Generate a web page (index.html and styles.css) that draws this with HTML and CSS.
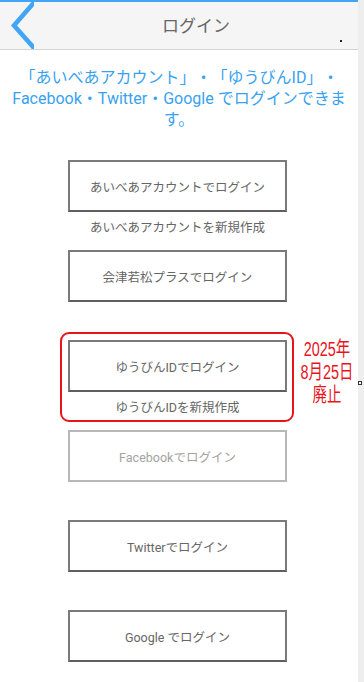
FILE: index.html
```html
<!DOCTYPE html>
<html lang="ja">
<head>
<meta charset="utf-8">
<title>ログイン</title>
<link rel="stylesheet" href="styles.css">
</head>
<body>
<div class="screen">
  <div class="page">
    <header class="topbar">
      <a class="back" href="#" aria-label="戻る">
        <svg width="34" height="47" viewBox="0 0 34 47">
          <polyline points="37.1,-3 14,23.5 37.6,50" fill="none" stroke="#42a5f5" stroke-width="4.6" stroke-linejoin="miter"/>
        </svg>
      </a>
      <h1 class="title">ログイン</h1>
      <span class="dot"></span>
    </header>
    <p class="intro">「あいべあアカウント」・「ゆうびんID」・Facebook・Twitter・Google でログインできます。</p>
    <ul class="logins">
      <li class="login-item">
        <a class="btn" href="#">あいべあアカウントでログイン</a>
        <div class="sub"><a href="#">あいべあアカウントを新規作成</a></div>
      </li>
      <li class="login-item">
        <a class="btn" href="#">会津若松プラスでログイン</a>
        <div class="sub"></div>
      </li>
      <li class="login-item retired">
        <a class="btn" href="#">ゆうびんIDでログイン</a>
        <div class="sub"><a href="#">ゆうびんIDを新規作成</a></div>
        <div class="notice">
          <span class="notice-line">2025年</span>
          <span class="notice-line">8月25日</span>
          <span class="notice-line">廃止</span>
        </div>
      </li>
      <li class="login-item">
        <a class="btn btn-muted" href="#">Facebookでログイン</a>
        <div class="sub"></div>
      </li>
      <li class="login-item">
        <a class="btn" href="#">Twitterでログイン</a>
        <div class="sub"></div>
      </li>
      <li class="login-item">
        <a class="btn" href="#">Google でログイン</a>
        <div class="sub"></div>
      </li>
    </ul>
  </div>
  <aside class="rail"><span class="marker"></span></aside>
</div>
</body>
</html>
```

FILE: styles.css
```css
html, body {
  margin: 0;
  padding: 0;
  background: #ffffff;
}

body {
  font-family: Roboto, "Noto Sans CJK JP", sans-serif;
  color: #666666;
}

.screen {
  display: flex;
  width: 364px;
  height: 682px;
  overflow: hidden;
}

.page {
  width: 358px;
  flex: none;
}

.rail {
  width: 6px;
  flex: none;
  background: #eeeeee;
}

.marker {
  display: block;
  margin-top: 381px;
  width: 4px;
  height: 4px;
  border: 1px solid #333333;
  box-sizing: border-box;
  background: #ffffff;
}

.topbar {
  position: relative;
  display: flex;
  align-items: center;
  height: 47px;
  border-top: 2px solid #42a5f5;
  border-bottom: 1px solid #d4d4d4;
  background: #f5f5f5;
}

.back {
  display: block;
  width: 34px;
  height: 47px;
  flex: none;
}

.back svg {
  display: block;
  overflow: hidden;
}

.title {
  flex: 1;
  margin: 0;
  text-align: center;
  font-size: 17px;
  font-weight: normal;
  color: #666666;
  line-height: 24px;
}

.dot {
  position: absolute;
  left: 340px;
  top: 38px;
  width: 2px;
  height: 2px;
  background: #222222;
}

.intro {
  margin: 0;
  padding: 17px 10px 0;
  font-size: 16px;
  line-height: 21px;
  color: #38a2f0;
  text-align: center;
  text-spacing-trim: space-all;
}

.logins {
  list-style: none;
  margin: 30px 0 0;
  padding: 0;
}

.login-item {
  position: relative;
  width: 219px;
  margin-left: 68px;
}

.btn {
  display: flex;
  align-items: center;
  justify-content: center;
  height: 52px;
  box-sizing: border-box;
  border: 2px solid #7a7a7a;
  border-bottom-color: #5e5e5e;
  color: #666666;
  font-size: 12.5px;
  text-decoration: none;
}

.btn-muted {
  border-color: #b8b8b8;
  color: #a3a3a3;
}

.sub {
  height: 38px;
  box-sizing: border-box;
  padding-top: 7px;
  text-align: center;
  font-size: 12.5px;
  line-height: 18px;
}

.sub a {
  color: #666666;
  text-decoration: none;
}

.retired::before {
  content: "";
  position: absolute;
  left: -8px;
  top: -8px;
  width: 234px;
  height: 90px;
  box-sizing: border-box;
  border: 2px solid #e8141c;
  border-radius: 9px;
  pointer-events: none;
}

.notice {
  position: absolute;
  left: 219px;
  top: -2px;
  width: 80px;
  text-align: center;
  color: #e8141c;
  font-family: "Liberation Sans", "Noto Sans CJK JP", sans-serif;
  font-size: 20px;
  line-height: 23px;
}

.notice-line {
  display: block;
  transform: scaleX(0.72);
}
```
